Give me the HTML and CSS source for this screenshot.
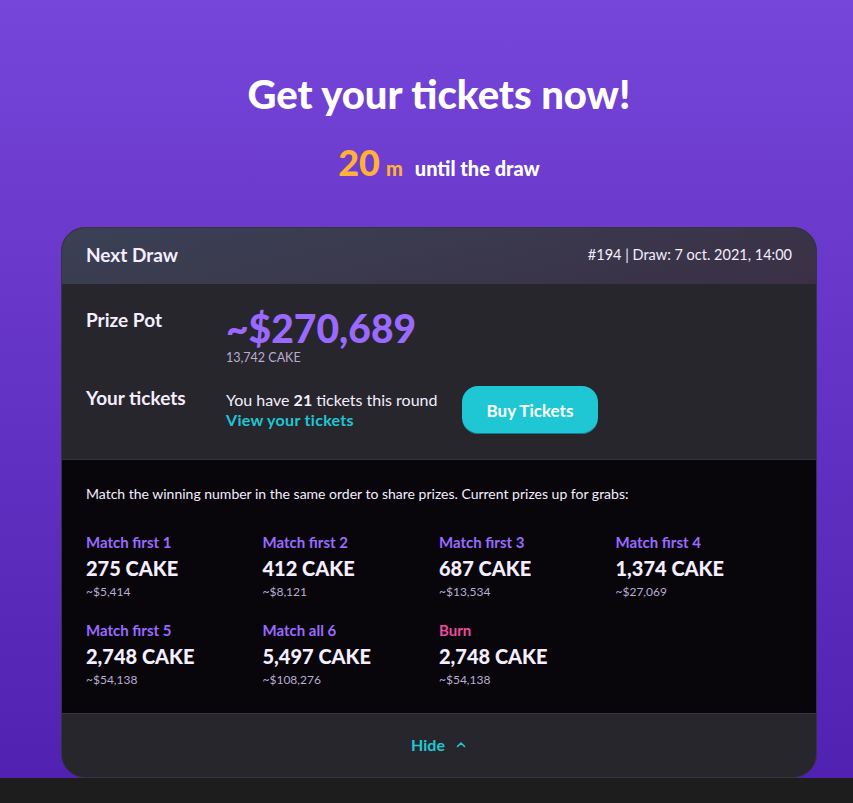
FILE: index.html
```html
<!DOCTYPE html>
<html lang="en">
<head>
<meta charset="utf-8">
<title>Lottery</title>
<link rel="stylesheet" href="styles.css">
</head>
<body>
<section class="hero">
  <div class="wrap">
    <h1 class="title">Get your tickets now!</h1>
    <div class="countdown">
      <span class="cd-num">20</span><span class="cd-unit">m</span><span class="cd-label">until the draw</span>
    </div>
    <div class="card">
      <div class="card-head">
        <h2 class="head-title">Next Draw</h2>
        <div class="head-meta">#194 | Draw: 7 oct. 2021, 14:00</div>
      </div>
      <div class="card-body">
        <div class="row row-pot">
          <div class="row-label">Prize Pot</div>
          <div class="pot">
            <div class="pot-usd">~$270,689</div>
            <div class="pot-cake">13,742 CAKE</div>
          </div>
        </div>
        <div class="row row-tickets">
          <div class="row-label">Your tickets</div>
          <div class="tickets">
            <div class="tickets-text">
              <div class="tickets-count">You have <b>21</b> tickets this round</div>
              <a class="tickets-link" href="#">View your tickets</a>
            </div>
            <button class="buy-btn" type="button">Buy Tickets</button>
          </div>
        </div>
      </div>
      <div class="prizes">
        <p class="prizes-intro">Match the winning number in the same order to share prizes. Current prizes up for grabs:</p>
        <div class="prize-grid">
          <div class="prize"><div class="prize-label">Match first 1</div><div class="prize-cake">275 CAKE</div><div class="prize-usd">~$5,414</div></div>
          <div class="prize"><div class="prize-label">Match first 2</div><div class="prize-cake">412 CAKE</div><div class="prize-usd">~$8,121</div></div>
          <div class="prize"><div class="prize-label">Match first 3</div><div class="prize-cake">687 CAKE</div><div class="prize-usd">~$13,534</div></div>
          <div class="prize"><div class="prize-label">Match first 4</div><div class="prize-cake">1,374 CAKE</div><div class="prize-usd">~$27,069</div></div>
          <div class="prize"><div class="prize-label">Match first 5</div><div class="prize-cake">2,748 CAKE</div><div class="prize-usd">~$54,138</div></div>
          <div class="prize"><div class="prize-label">Match all 6</div><div class="prize-cake">5,497 CAKE</div><div class="prize-usd">~$108,276</div></div>
          <div class="prize"><div class="prize-label burn">Burn</div><div class="prize-cake">2,748 CAKE</div><div class="prize-usd">~$54,138</div></div>
        </div>
      </div>
      <div class="card-foot">
        <button class="hide-btn" type="button">Hide
          <svg class="chev" width="12" height="12" viewBox="0 0 12 12" aria-hidden="true"><path d="M2.5 7.5 L6 4 L9.5 7.5" fill="none" stroke="#1FC7D4" stroke-width="1.6" stroke-linecap="round" stroke-linejoin="round"/></svg>
        </button>
      </div>
    </div>
  </div>
</section>
<div class="bottom"></div>
</body>
</html>
```

FILE: styles.css
```css
* { box-sizing: border-box; }
html, body { margin: 0; padding: 0; }
body {
  font-family: "Lato", "Noto Sans", sans-serif;
  color: #F4EEFF;
  background: #1d1d1d;
}
.hero {
  background: linear-gradient(180deg, #7645D9 0%, #5121B1 100%);
  height: 778px;
  padding-top: 72px;
}
.wrap {
  margin-left: 61px;
  width: 756px;
}
.title {
  margin: 0;
  text-align: center;
  font-size: 40px;
  line-height: 44px;
  font-weight: 900;
  color: #fff;
}
.countdown {
  margin-top: 24px;
  display: flex;
  justify-content: center;
  align-items: baseline;
  height: 50px;
}
.cd-num {
  font-size: 36px;
  font-weight: 900;
  color: #FFB237;
}
.cd-unit {
  font-size: 20px;
  font-weight: 900;
  color: #FFB237;
  margin-left: 6px;
}
.cd-label {
  font-size: 20px;
  font-weight: 900;
  color: #fff;
  margin-left: 12px;
}
.card {
  margin-top: 37px;
  border: 1px solid #383241;
  border-radius: 24px;
  overflow: hidden;
  background: #27262C;
}
.card-head {
  height: 56px;
  padding: 0 24px 3px;
  display: flex;
  align-items: center;
  justify-content: space-between;
  background: linear-gradient(166.77deg, #3B4155 0%, #3A3045 100%);
}
.head-title {
  margin: 0;
  font-size: 19px;
  font-weight: 700;
}
.head-meta {
  font-size: 14.5px;
}
.card-body {
  padding: 22px 24px 25px;
  border-bottom: 1px solid #383241;
  display: flex;
  flex-direction: column;
  gap: 20px;
}
.row {
  display: grid;
  grid-template-columns: 140px 1fr;
  align-items: start;
}
.row-label {
  font-size: 19px;
  font-weight: 700;
  line-height: 28px;
}
.pot-usd {
  font-size: 39px;
  line-height: 44px;
  font-weight: 900;
  color: #9A6AFF;
}
.pot-cake {
  font-size: 12.5px;
  color: #B8ADD2;
  line-height: 16px;
}
.row-tickets { align-items: center; }
.row-tickets .row-label { align-self: start; margin-top: -2px; }
.tickets {
  display: flex;
  align-items: center;
  gap: 24px;
}
.tickets-count {
  font-size: 16px;
  line-height: 20px;
}
.tickets-count b { font-weight: 700; }
.tickets-link {
  display: block;
  font-size: 16px;
  line-height: 20px;
  font-weight: 700;
  color: #1FC7D4;
  text-decoration: none;
  letter-spacing: 0.3px;
}
.buy-btn {
  height: 48px;
  padding: 0 25px;
  border: 0;
  border-radius: 16px;
  background: #1FC7D4;
  color: #fff;
  font-family: inherit;
  font-size: 17px;
  font-weight: 700;
  box-shadow: inset 0 -1px 0 rgba(14, 14, 44, 0.4);
}
.prizes {
  background: #08060B;
  padding: 24px 24px 25px;
  border-bottom: 1px solid #383241;
}
.prizes-intro {
  margin: 0 0 28px;
  font-size: 14px;
  line-height: 20px;
}
.prize-grid {
  display: grid;
  grid-template-columns: repeat(4, 1fr);
  row-gap: 20px;
}
.prize-label {
  font-size: 15px;
  line-height: 20px;
  font-weight: 700;
  color: #9A6AFF;
}
.prize-label.burn { color: #ED4B9E; }
.prize-cake {
  margin-top: 4px;
  font-size: 20px;
  line-height: 24px;
  font-weight: 900;
}
.prize-usd {
  margin-top: 4px;
  font-size: 12px;
  line-height: 16px;
  color: #B8ADD2;
}
.card-foot {
  height: 63px;
  padding-bottom: 2px;
  display: flex;
  align-items: center;
  justify-content: center;
}
.hide-btn {
  background: none;
  border: 0;
  padding: 0;
  display: flex;
  align-items: center;
  gap: 10px;
  font-family: inherit;
  font-size: 16px;
  font-weight: 700;
  color: #1FC7D4;
}
.bottom {
  height: 25px;
  background: #1d1d1d;
}
```
